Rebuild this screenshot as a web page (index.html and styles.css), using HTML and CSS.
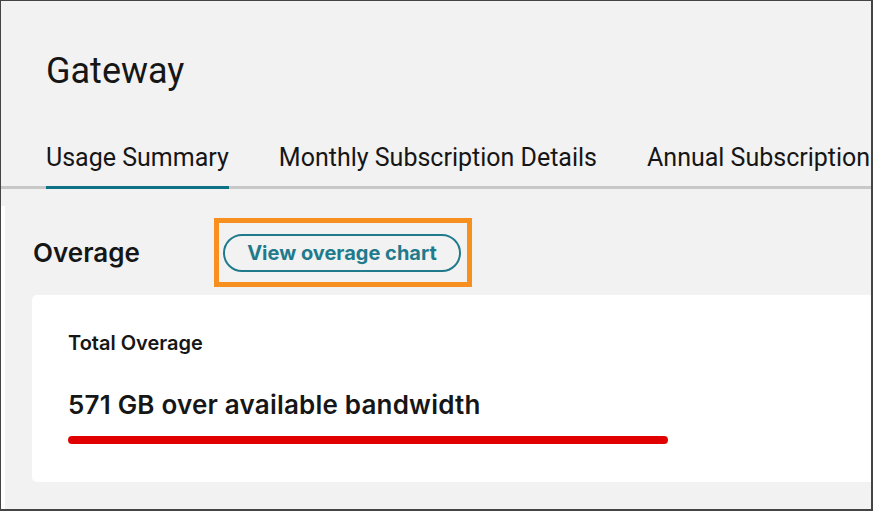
FILE: index.html
```html
<!DOCTYPE html>
<html lang="en">
<head>
    <meta charset="UTF-8">
    <meta name="viewport" content="width=device-width, initial-scale=1.0">
    <title>Gateway</title>
    <link rel="stylesheet" href="styles.css">
</head>
<body>
    <div class="frame">
        <div class="header">
            <h1 class="title">Gateway</h1>
        </div>

        <nav class="tabs">
            <div class="tab active">Usage Summary</div>
            <div class="tab">Monthly Subscription Details</div>
            <div class="tab">Annual Subscription Details</div>
        </nav>

        <main class="content">
            <div class="section-head">
                <h2 class="section-title">Overage</h2>
                <div class="callout">
                    <button class="btn-outline">View overage chart</button>
                </div>
            </div>

            <div class="card">
                <div class="card-label">Total Overage</div>
                <div class="card-value">571 GB over available bandwidth</div>
                <div class="bar">
                    <div class="bar-fill" style="width: 600px"></div>
                </div>
            </div>
        </main>
    </div>
</body>
</html>
```

FILE: styles.css
```css
* {
    margin: 0;
    padding: 0;
    box-sizing: border-box;
}

html, body {
    width: 873px;
    height: 511px;
    overflow: hidden;
}

body {
    font-family: Inter, Roboto, 'Liberation Sans', Arial, sans-serif;
    background: #f2f2f2;
    color: #161616;
}

.frame {
    width: 873px;
    height: 511px;
    border-top: 1px solid #444;
    border-left: 1px solid #444;
    border-right: 2px solid #444;
    border-bottom: 2px solid #444;
    overflow: hidden;
    display: flex;
    flex-direction: column;
}

.header {
    padding: 48px 0 0 45px;
    height: 142px;
}

.title {
    font-family: Roboto, Arial, sans-serif;
    font-size: 36px;
    font-weight: 400;
    line-height: 44px;
}

.tabs {
    display: flex;
    gap: 50px;
    padding-left: 45px;
    border-bottom: 3px solid #c8c8c8;
    white-space: nowrap;
}

.tab {
    font-family: Roboto, Arial, sans-serif;
    font-size: 25px;
    line-height: 30px;
    padding-bottom: 13px;
    margin-bottom: -3px;
    border-bottom: 3px solid transparent;
}

.tab.active {
    border-bottom-color: #0e7285;
}

.content {
    flex: 1;
    margin-top: 17px;
    border-left: 4px solid #fff;
    padding: 12px 0 0 28px;
}

.section-head {
    display: flex;
    align-items: center;
    height: 69px;
}

.section-title {
    width: 181px;
    font-size: 26px;
    font-weight: 600;
}

.callout {
    border: 5px solid #f7901e;
    padding: 11px 6px 10px 4px;
}

.btn-outline {
    font-family: inherit;
    font-size: 20px;
    font-weight: 700;
    color: #1f7a8c;
    background: transparent;
    border: 2.5px solid #1f7a8c;
    border-radius: 20px;
    width: 238px;
    height: 38px;
}

.card {
    background: #fff;
    border-radius: 5px 0 0 5px;
    margin: 8px -10px 0 -1px;
    height: 187px;
    padding: 36px 0 0 36px;
}

.card-label {
    font-size: 20px;
    font-weight: 600;
    line-height: 24px;
}

.card-value {
    font-size: 26px;
    font-weight: 600;
    letter-spacing: 0.2px;
    line-height: 30px;
    margin-top: 35px;
}

.bar {
    margin-top: 16px;
}

.bar-fill {
    height: 8px;
    background: #e00000;
    border-radius: 4px;
}
```
